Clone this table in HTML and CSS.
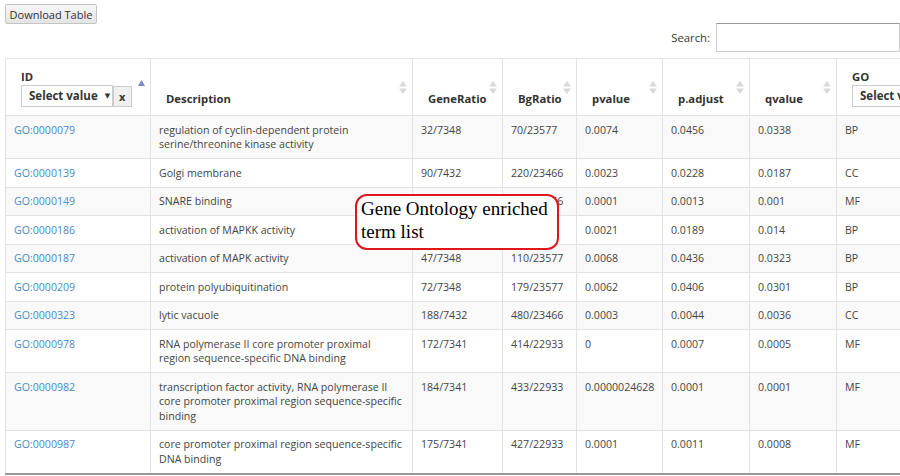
FILE: index.html
```html
<!DOCTYPE html>
<html>
<head>
<meta charset="utf-8">
<link rel="stylesheet" href="styles.css">
</head>
<body>
<div class="page">
  <div class="toolbar"><button class="dl-btn">Download Table</button></div>
  <div class="search-row"><label class="search-label">Search:</label><input class="search-input" type="text"></div>
  <table class="grid">
    <colgroup>
      <col class="c-id"><col class="c-desc"><col class="c-gr"><col class="c-bg"><col class="c-p"><col class="c-pa"><col class="c-q"><col class="c-go">
    </colgroup>
    <thead>
      <tr>
        <th class="th-filter">
          <div class="th-title">ID</div>
          <div class="filter"><span class="sel">Select value <span class="caret">▼</span></span><span class="clear">x</span></div>
          <svg class="sort-asc" width="7" height="6" viewBox="0 0 7 6"><path d="M0 6 L3.5 0 L7 6 Z" fill="#7f86c9"/></svg>
        </th>
        <th>Description<svg class="sort" width="8" height="13" viewBox="0 0 8 13"><path d="M0 5.5 L4 0 L8 5.5 Z M0 7.5 L4 13 L8 7.5 Z" fill="#d9d9d9"/></svg></th>
        <th>GeneRatio<svg class="sort" width="8" height="13" viewBox="0 0 8 13"><path d="M0 5.5 L4 0 L8 5.5 Z M0 7.5 L4 13 L8 7.5 Z" fill="#d9d9d9"/></svg></th>
        <th>BgRatio<svg class="sort" width="8" height="13" viewBox="0 0 8 13"><path d="M0 5.5 L4 0 L8 5.5 Z M0 7.5 L4 13 L8 7.5 Z" fill="#d9d9d9"/></svg></th>
        <th>pvalue<svg class="sort" width="8" height="13" viewBox="0 0 8 13"><path d="M0 5.5 L4 0 L8 5.5 Z M0 7.5 L4 13 L8 7.5 Z" fill="#d9d9d9"/></svg></th>
        <th>p.adjust<svg class="sort" width="8" height="13" viewBox="0 0 8 13"><path d="M0 5.5 L4 0 L8 5.5 Z M0 7.5 L4 13 L8 7.5 Z" fill="#d9d9d9"/></svg></th>
        <th>qvalue<svg class="sort" width="8" height="13" viewBox="0 0 8 13"><path d="M0 5.5 L4 0 L8 5.5 Z M0 7.5 L4 13 L8 7.5 Z" fill="#d9d9d9"/></svg></th>
        <th class="th-filter">
          <div class="th-title">GO</div>
          <div class="filter"><span class="sel">Select value <span class="caret">▼</span></span></div>
        </th>
      </tr>
    </thead>
    <tbody>
      <tr><td><a>GO:0000079</a></td><td>regulation of cyclin-dependent protein serine/threonine kinase activity</td><td>32/7348</td><td>70/23577</td><td>0.0074</td><td>0.0456</td><td>0.0338</td><td>BP</td></tr>
      <tr><td><a>GO:0000139</a></td><td>Golgi membrane</td><td>90/7432</td><td>220/23466</td><td>0.0023</td><td>0.0228</td><td>0.0187</td><td>CC</td></tr>
      <tr><td><a>GO:0000149</a></td><td>SNARE binding</td><td>52/7432</td><td>128/23466</td><td>0.0001</td><td>0.0013</td><td>0.001</td><td>MF</td></tr>
      <tr><td><a>GO:0000186</a></td><td>activation of MAPKK activity</td><td>38/7348</td><td>79/23577</td><td>0.0021</td><td>0.0189</td><td>0.014</td><td>BP</td></tr>
      <tr><td><a>GO:0000187</a></td><td>activation of MAPK activity</td><td>47/7348</td><td>110/23577</td><td>0.0068</td><td>0.0436</td><td>0.0323</td><td>BP</td></tr>
      <tr><td><a>GO:0000209</a></td><td>protein polyubiquitination</td><td>72/7348</td><td>179/23577</td><td>0.0062</td><td>0.0406</td><td>0.0301</td><td>BP</td></tr>
      <tr><td><a>GO:0000323</a></td><td>lytic vacuole</td><td>188/7432</td><td>480/23466</td><td>0.0003</td><td>0.0044</td><td>0.0036</td><td>CC</td></tr>
      <tr><td><a>GO:0000978</a></td><td>RNA polymerase II core promoter proximal region sequence-specific DNA binding</td><td>172/7341</td><td>414/22933</td><td>0</td><td>0.0007</td><td>0.0005</td><td>MF</td></tr>
      <tr><td><a>GO:0000982</a></td><td>transcription factor activity, RNA polymerase II core promoter proximal region sequence-specific binding</td><td>184/7341</td><td>433/22933</td><td>0.0000024628</td><td>0.0001</td><td>0.0001</td><td>MF</td></tr>
      <tr><td><a>GO:0000987</a></td><td>core promoter proximal region sequence-specific DNA binding</td><td>175/7341</td><td>427/22933</td><td>0.0001</td><td>0.0011</td><td>0.0008</td><td>MF</td></tr>
    </tbody>
  </table>
  <div class="callout"><span class="callout-line">Gene Ontology enriched</span><br>term list</div>
</div>
</body>
</html>
```
FILE: styles.css
```css
html, body {
  margin: 0;
  padding: 0;
  background: #fff;
}
body {
  width: 900px;
  height: 476px;
  overflow: hidden;
  font-family: "Open Sans", "DejaVu Sans", sans-serif;
  font-size: 10.6px;
  color: #333;
}
.page {
  position: relative;
  padding: 4px 0 0 5px;
  width: 1000px;
}
.toolbar {
  display: flex;
}
.dl-btn {
  font-family: "Open Sans", sans-serif;
  font-size: 11px;
  color: #333;
  height: 20px;
  width: 92px;
  padding: 0;
  border: 1px solid #c4c4c4;
  border-radius: 2px;
  background: linear-gradient(#f7f7f7, #e4e4e4);
}
.search-row {
  display: flex;
  align-items: center;
  width: 895px;
  justify-content: flex-end;
  margin-top: -1px;
}
.search-label {
  color: #333;
  margin-right: 6px;
  font-size: 11.3px;
}
.search-input {
  width: 184px;
  height: 29px;
  box-sizing: border-box;
  border: 1px solid #ccc;
  border-top-color: #999;
  margin: 0;
}
.grid {
  margin-top: 6px;
  border-collapse: collapse;
  table-layout: fixed;
  width: 920px;
  border-bottom: 2px solid #999;
}
.c-id { width: 145px; }
.c-desc { width: 262px; }
.c-gr { width: 90px; }
.c-bg { width: 74px; }
.c-p { width: 86px; }
.c-pa { width: 87px; }
.c-q { width: 87px; }
.c-go { width: 89px; }
.grid th {
  position: relative;
  text-align: left;
  vertical-align: bottom;
  font-weight: 700;
  font-size: 11.3px;
  color: #333;
  border: 1px solid #e2e2e2;
  padding: 10px 18px 9px 15px;
  height: 37px;
  line-height: 14px;
}
.grid th.th-filter {
  padding-left: 15px;
  padding-bottom: 8px;
}
.th-title {
  margin-bottom: 1px;
}
.filter {
  display: flex;
  height: 22px;
  white-space: nowrap;
}
.sel {
  display: flex;
  align-items: center;
  box-sizing: border-box;
  height: 22px;
  width: 94px;
  padding-left: 7px;
  border: 1px solid #ccc;
  background: #fff;
  font-size: 11.5px;
}
.caret {
  font-size: 7px;
  margin-left: 7px;
}
.clear {
  display: flex;
  align-items: center;
  justify-content: center;
  box-sizing: border-box;
  height: 21px;
  width: 20px;
  margin-top: 1px;
  border: 1px solid #ccc;
  background: #f0f0f0;
  font-size: 11px;
}
.sort {
  position: absolute;
  right: 5px;
  top: 22px;
}
.sort-asc {
  position: absolute;
  right: 5px;
  top: 21px;
}
.grid td {
  border: 1px solid #e2e2e2;
  padding: 6.5px 9px 6.5px 8px;
  vertical-align: top;
  line-height: 14.5px;
  color: #444;
}
.grid tbody tr:nth-child(odd) td {
  background: #f9f9f9;
}
.grid a {
  color: #4a8ac7;
}
.callout {
  position: absolute;
  left: 355px;
  top: 194px;
  width: 204px;
  height: 56px;
  box-sizing: border-box;
  padding: 1px 4px 0 4px;
  border: 2px solid #e0161b;
  border-radius: 12px;
  background: #fff;
  font-family: "Liberation Serif", "Times New Roman", serif;
  font-size: 19px;
  line-height: 23px;
  color: #000;
  white-space: nowrap;
}
```
